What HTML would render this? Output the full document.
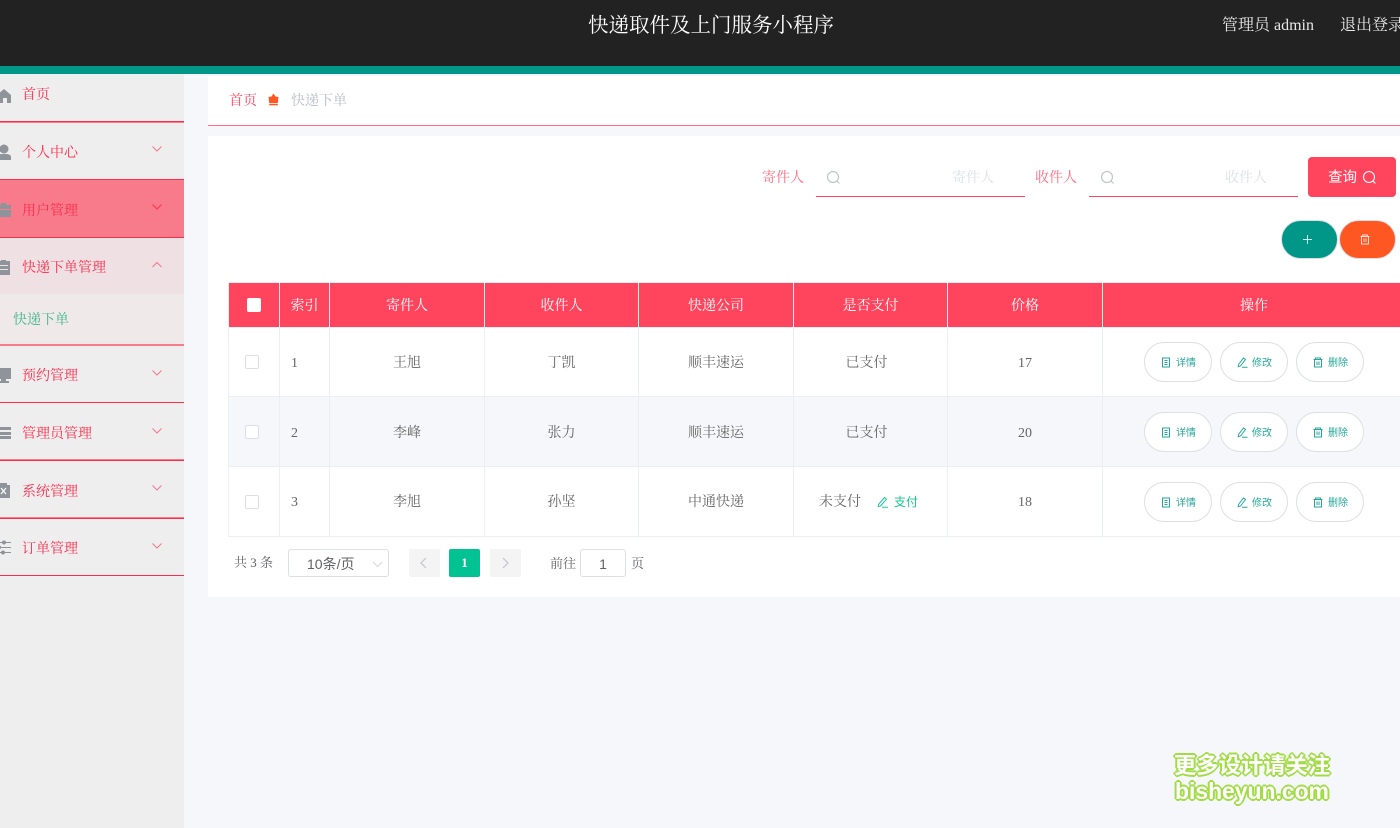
<!DOCTYPE html>
<html lang="zh"><head><meta charset="utf-8"><title>快递取件及上门服务小程序</title>
<style>
*{box-sizing:border-box}
html,body{margin:0;padding:0;width:1400px;height:828px;overflow:hidden;background:#f5f7fa;font-family:"Liberation Serif","Noto Serif CJK SC",serif}
.a{position:absolute;white-space:nowrap}
.sans{font-family:"Liberation Sans","Noto Sans CJK SC",sans-serif}
.hd{left:0;top:0;width:1400px;height:66px;background:#222}
.band{left:0;top:66px;width:1400px;height:8px;background:#009688}
.side{left:0;top:74px;width:184px;height:754px;background:#eee}
.line{left:0;width:184px;height:1px;background:#ff2b4a}
.pk{background:#f77b8a}
.mi{left:22px;font-size:14px;line-height:20px;color:#ff2b4a}
.chev{left:151px;width:12px;height:8px}
.card{left:208px;top:136px;width:1192px;height:461px;background:#fff}
.th{top:283px;height:44px;background:#ff455e;color:#fff;font-size:14px;line-height:48px;text-align:center}
.td{font-size:14px;line-height:20px;text-align:center;color:#666}
.btn{width:68px;height:40px;border:1px solid #dcdfe6;border-radius:20px;background:#fff;color:#26a69a;font-size:10px;line-height:42px;padding-left:31px}
.btn svg{position:absolute;left:16px;top:14px}
.cb{left:245px;width:14px;height:14px;border:1px solid #dcdfe6;border-radius:2px;background:#fff}
.wm{font-family:"Liberation Sans","Noto Sans CJK SC",sans-serif;font-weight:700;color:#fff;text-shadow:1px 1px 0 #a2dc45,-1px -1px 0 #a2dc45,1px -1px 0 #a2dc45,-1px 1px 0 #a2dc45,2px 0 0 #a2dc45,-2px 0 0 #a2dc45,0 2px 0 #a2dc45,0 -2px 0 #a2dc45}
</style></head><body>
<div class="a hd"></div><div class="a band"></div>
<div class="a" style="left:588px;top:12px;font-size:20.500px;line-height:28px;color:#fff">快递取件及上门服务小程序</div>
<div class="a" style="left:1222px;top:16px;font-size:16px;line-height:20px;color:#e8e8e8">管理员 admin</div>
<div class="a" style="left:1340px;top:16px;font-size:16px;line-height:20px;color:#e8e8e8">退出登录</div>

<div class="a side"></div>
<div class="a" style="left:0;top:180px;width:184px;height:57px;background:#f77b8a"></div>
<div class="a" style="left:0;top:238px;width:184px;height:56px;background:#eee0e3"></div>
<div class="a" style="left:0;top:294px;width:184px;height:51px;background:#efe9ea"></div>
<div class="a line" style="top:121px"></div><div class="a line pk" style="top:122px"></div>
<div class="a line" style="top:179px"></div>
<div class="a line pk" style="top:236px"></div><div class="a line" style="top:237px"></div>
<div class="a line pk" style="top:344px"></div><div class="a line pk" style="top:345px"></div>
<div class="a line" style="top:402px"></div>
<div class="a line pk" style="top:459px"></div><div class="a line" style="top:460px"></div>
<div class="a line pk" style="top:517px"></div><div class="a line" style="top:518px"></div>
<div class="a line" style="top:575px"></div>

<div class="a mi" style="top:86px">首页</div>
<div class="a mi" style="top:144px">个人中心</div>
<div class="a mi" style="top:202px">用户管理</div>
<div class="a mi" style="top:259px">快递下单管理</div>
<div class="a" style="left:13px;top:311px;font-size:14px;line-height:20px;color:#3fb58a">快递下单</div>
<div class="a mi" style="top:367px">预约管理</div>
<div class="a mi" style="top:425px">管理员管理</div>
<div class="a mi" style="top:483px">系统管理</div>
<div class="a mi" style="top:540px">订单管理</div>

<svg class="a" style="left:0;top:74px" width="14" height="510" fill="#8f939a">
<path d="M-3 21L4 15L11 21V29H7V24H3V29H-3Z"/>
<circle cx="4" cy="75" r="4.500"/><path d="M-3 86V83C-3 80 1 80 4 80C7 80 11 80 11 83V86Z"/>
<path d="M-4 131H11V135H-4ZM-4 136H11V143H-4ZM1 129V131H6V129Z"/>
<path d="M-3 187H1V186H6V187H10V201H-3ZM0 191V192H8V191ZM0 195V196H8V195Z"/>
<path d="M-4 294H11V305H6V307H9V309H-2V307H1V305H-4Z"/>
<path d="M-4 353H11V356H-4ZM-1 358H11V361H-1ZM-4 362H11V365H-4Z"/>
<path d="M-3 411H0V409H7V411H10V424H-3Z"/><path d="M1 414L6 420M6 414L1 420" stroke="#fff" stroke-width="1.200"/>
<path d="M-4 468H11V469H-4ZM-4 473H11V474H-4ZM-4 478H11V479H-4Z"/><circle cx="4" cy="468.500" r="2"/><circle cx="-1" cy="473.500" r="2"/><circle cx="3" cy="478.500" r="2"/>
</svg>

<svg class="a chev" style="top:145px" viewBox="0 0 12 8" fill="none" stroke="#f5758a"><path d="M1.500 1.500L6 6L10.500 1.500"/></svg>
<svg class="a chev" style="top:203px" viewBox="0 0 12 8" fill="none" stroke="#ff3355"><path d="M1.500 1.500L6 6L10.500 1.500"/></svg>
<svg class="a chev" style="top:261px" viewBox="0 0 12 8" fill="none" stroke="#f5758a"><path d="M1.500 6L6 1.500L10.500 6"/></svg>
<svg class="a chev" style="top:369px" viewBox="0 0 12 8" fill="none" stroke="#f5758a"><path d="M1.500 1.500L6 6L10.500 1.500"/></svg>
<svg class="a chev" style="top:427px" viewBox="0 0 12 8" fill="none" stroke="#f5758a"><path d="M1.500 1.500L6 6L10.500 1.500"/></svg>
<svg class="a chev" style="top:484px" viewBox="0 0 12 8" fill="none" stroke="#f5758a"><path d="M1.500 1.500L6 6L10.500 1.500"/></svg>
<svg class="a chev" style="top:542px" viewBox="0 0 12 8" fill="none" stroke="#f5758a"><path d="M1.500 1.500L6 6L10.500 1.500"/></svg>

<div class="a" style="left:208px;top:76px;width:1192px;height:50px;background:#fff;border-bottom:1px solid #ff6b80"></div>
<div class="a" style="left:229px;top:92px;font-size:14px;line-height:20px;color:#ff455e">首页</div>
<svg class="a" style="left:268px;top:93px" width="11" height="13" fill="#ff5722"><path d="M5.500 0.500L7.500 3.500L10.500 4L9.800 10H1.200L0.500 4L3.500 3.500Z"/><rect x="1.200" y="10.800" width="8.600" height="1.500"/></svg>
<div class="a" style="left:291px;top:92px;font-size:14px;line-height:20px;color:#b6bcc8">快递下单</div>

<div class="a card"></div>
<div class="a" style="left:762px;top:169px;font-size:14px;line-height:20px;color:#ff6b80">寄件人</div>
<svg class="a" style="left:826px;top:170px" width="15" height="15" fill="none" stroke="#c0c4cc" stroke-width="1.200"><circle cx="7" cy="7" r="5.500"/><path d="M11 11L13.500 13.500"/></svg>
<div class="a" style="left:952px;top:169px;font-size:14px;line-height:20px;color:#dcdfe6">寄件人</div>
<div class="a" style="left:816px;top:196px;width:209px;height:1px;background:#ff455e"></div>
<div class="a" style="left:1035px;top:169px;font-size:14px;line-height:20px;color:#ff6b80">收件人</div>
<svg class="a" style="left:1100px;top:170px" width="15" height="15" fill="none" stroke="#c0c4cc" stroke-width="1.200"><circle cx="7" cy="7" r="5.500"/><path d="M11 11L13.500 13.500"/></svg>
<div class="a" style="left:1225px;top:169px;font-size:14px;line-height:20px;color:#dcdfe6">收件人</div>
<div class="a" style="left:1089px;top:196px;width:209px;height:1px;background:#ff455e"></div>
<div class="a sans" style="left:1308px;top:157px;width:88px;height:40px;background:#ff455e;border-radius:4px;color:#fff;font-size:14.500px;line-height:42px;padding-left:20px">查询</div>
<svg class="a" style="left:1362px;top:170px" width="15" height="15" fill="none" stroke="#fff" stroke-width="1.100"><circle cx="7" cy="7" r="5.500"/><path d="M11 11L13.500 13.500"/></svg>

<div class="a" style="left:1281px;top:220px;width:57px;height:39px;border-radius:20px;background:#009688;border:1px solid #dcdfe6"></div>
<svg class="a" style="left:1303px;top:235px" width="9" height="9" stroke="#d8efec" stroke-width=".9"><path d="M4.500 0V9M0 4.500H9"/></svg>
<div class="a" style="left:1339px;top:220px;width:57px;height:39px;border-radius:20px;background:#ff5722;border:1px solid #dcdfe6"></div>
<svg class="a" style="left:1360px;top:234px" width="10" height="11" fill="none" stroke="#ffe5dc" stroke-width=".9"><path d="M0.500 2.500H9.500M2.500 2.500V1H7.500V2.500M1.500 2.500V10H8.500V2.500M4 4.500V8M6 4.500V8"/></svg>

<div class="a" style="left:228px;top:282px;width:1172px;height:255px;background:#ebeef5"></div>
<div class="a th" style="left:229px;width:50px"></div>
<div class="a" style="left:247px;top:298px;width:14px;height:14px;background:#fff;border-radius:2px"></div>
<div class="a th" style="left:280px;width:49px">索引</div>
<div class="a th" style="left:330px;width:154px">寄件人</div>
<div class="a th" style="left:485px;width:153px">收件人</div>
<div class="a th" style="left:639px;width:154px">快递公司</div>
<div class="a th" style="left:794px;width:153px">是否支付</div>
<div class="a th" style="left:948px;width:154px">价格</div>
<div class="a th" style="left:1103px;width:297px"><span style="position:absolute;left:137px;top:0">操作</span></div>

<div class="a" style="left:229px;top:328px;width:1171px;height:68px;background:#fff"></div>
<div class="a" style="left:229px;top:397px;width:1171px;height:69px;background:#f5f7fa"></div>
<div class="a" style="left:229px;top:467px;width:1171px;height:69px;background:#fff"></div>
<div class="a" style="left:279px;top:327px;width:1px;height:209px;background:#ebeef5"></div>
<div class="a" style="left:329px;top:327px;width:1px;height:209px;background:#ebeef5"></div>
<div class="a" style="left:484px;top:327px;width:1px;height:209px;background:#ebeef5"></div>
<div class="a" style="left:638px;top:327px;width:1px;height:209px;background:#ebeef5"></div>
<div class="a" style="left:793px;top:327px;width:1px;height:209px;background:#ebeef5"></div>
<div class="a" style="left:947px;top:327px;width:1px;height:209px;background:#ebeef5"></div>
<div class="a" style="left:1102px;top:327px;width:1px;height:209px;background:#ebeef5"></div>

<div class="a cb" style="top:355px"></div>
<div class="a td" style="left:291px;top:354px">1</div>
<div class="a td" style="left:330px;top:354px;width:154px">王旭</div>
<div class="a td" style="left:485px;top:354px;width:153px">丁凯</div>
<div class="a td" style="left:639px;top:354px;width:154px">顺丰速运</div>
<div class="a td" style="left:790px;top:354px;width:153px">已支付</div>
<div class="a td" style="left:948px;top:354px;width:154px">17</div>

<div class="a cb" style="top:425px"></div>
<div class="a td" style="left:291px;top:424px">2</div>
<div class="a td" style="left:330px;top:424px;width:154px">李峰</div>
<div class="a td" style="left:485px;top:424px;width:153px">张力</div>
<div class="a td" style="left:639px;top:424px;width:154px">顺丰速运</div>
<div class="a td" style="left:790px;top:424px;width:153px">已支付</div>
<div class="a td" style="left:948px;top:424px;width:154px">20</div>

<div class="a cb" style="top:495px"></div>
<div class="a td" style="left:291px;top:493px">3</div>
<div class="a td" style="left:330px;top:493px;width:154px">李旭</div>
<div class="a td" style="left:485px;top:493px;width:153px">孙坚</div>
<div class="a td" style="left:639px;top:493px;width:154px">中通快递</div>
<div class="a td" style="left:819px;top:493px">未支付</div>
<svg class="a" style="left:877px;top:496px" width="12" height="12" fill="none" stroke="#1fc99a"><path d="M1.500 8.500L7.500 1.500L9.500 3.200L3.500 10L1.200 10.500ZM5 11.300H11"/></svg>
<div class="a sans" style="left:894px;top:492px;font-size:12px;line-height:20px;color:#19c48f">支付</div>
<div class="a td" style="left:948px;top:493px;width:154px">18</div>

<div class="a btn sans" style="left:1144px;top:342px"><svg width="10" height="11" fill="none" stroke="#26a69a"><path d="M1.500 1H8.500V10H1.500ZM3.500 3.500H6.500M3.500 5.500H6.500M3.500 7.500H6.500"/></svg>详情</div>
<div class="a btn sans" style="left:1220px;top:342px"><svg width="11" height="11" fill="none" stroke="#26a69a"><path d="M1.500 7.500L6.500 1L8.500 2.500L3.500 9L1.200 9.700ZM5 10.300H10.500"/></svg>修改</div>
<div class="a btn sans" style="left:1296px;top:342px"><svg width="10" height="11" fill="none" stroke="#26a69a"><path d="M0.500 2.500H9.500M2.500 2.500V1H7.500V2.500M1.500 2.500V10H8.500V2.500M4 4.500V8M6 4.500V8"/></svg>删除</div>

<div class="a btn sans" style="left:1144px;top:412px"><svg width="10" height="11" fill="none" stroke="#26a69a"><path d="M1.500 1H8.500V10H1.500ZM3.500 3.500H6.500M3.500 5.500H6.500M3.500 7.500H6.500"/></svg>详情</div>
<div class="a btn sans" style="left:1220px;top:412px"><svg width="11" height="11" fill="none" stroke="#26a69a"><path d="M1.500 7.500L6.500 1L8.500 2.500L3.500 9L1.200 9.700ZM5 10.300H10.500"/></svg>修改</div>
<div class="a btn sans" style="left:1296px;top:412px"><svg width="10" height="11" fill="none" stroke="#26a69a"><path d="M0.500 2.500H9.500M2.500 2.500V1H7.500V2.500M1.500 2.500V10H8.500V2.500M4 4.500V8M6 4.500V8"/></svg>删除</div>

<div class="a btn sans" style="left:1144px;top:482px"><svg width="10" height="11" fill="none" stroke="#26a69a"><path d="M1.500 1H8.500V10H1.500ZM3.500 3.500H6.500M3.500 5.500H6.500M3.500 7.500H6.500"/></svg>详情</div>
<div class="a btn sans" style="left:1220px;top:482px"><svg width="11" height="11" fill="none" stroke="#26a69a"><path d="M1.500 7.500L6.500 1L8.500 2.500L3.500 9L1.200 9.700ZM5 10.300H10.500"/></svg>修改</div>
<div class="a btn sans" style="left:1296px;top:482px"><svg width="10" height="11" fill="none" stroke="#26a69a"><path d="M0.500 2.500H9.500M2.500 2.500V1H7.500V2.500M1.500 2.500V10H8.500V2.500M4 4.500V8M6 4.500V8"/></svg>删除</div>

<div class="a" style="left:234px;top:553px;font-size:13px;line-height:20px;color:#606266">共 3 条</div>
<div class="a sans" style="left:288px;top:549px;width:101px;height:28px;border:1px solid #dcdfe6;border-radius:3px;background:#fff;font-size:14px;line-height:28px;color:#606266;padding-left:18px">10条/页</div>
<svg class="a" style="left:372px;top:561px" width="11" height="7" fill="none" stroke="#d5d8de"><path d="M1 1L5.500 5.500L10 1"/></svg>
<div class="a" style="left:409px;top:549px;width:31px;height:28px;background:#f4f4f5;border-radius:2px"></div>
<svg class="a" style="left:420px;top:557px" width="7" height="12" fill="none" stroke="#c0c4cc" stroke-width="1.200"><path d="M6 1L1 6L6 11"/></svg>
<div class="a" style="left:449px;top:549px;width:31px;height:28px;background:#00c292;border-radius:2px;color:#fff;font-size:13px;font-weight:700;line-height:28px;text-align:center">1</div>
<div class="a" style="left:490px;top:549px;width:31px;height:28px;background:#f4f4f5;border-radius:2px"></div>
<svg class="a" style="left:502px;top:557px" width="7" height="12" fill="none" stroke="#c0c4cc" stroke-width="1.200"><path d="M1 1L6 6L1 11"/></svg>
<div class="a" style="left:550px;top:554px;font-size:13px;line-height:20px;color:#606266">前往</div>
<div class="a sans" style="left:580px;top:549px;width:46px;height:28px;border:1px solid #dcdfe6;border-radius:3px;background:#fff;font-size:14px;line-height:28px;color:#606266;text-align:center">1</div>
<div class="a" style="left:631px;top:554px;font-size:13px;line-height:20px;color:#606266">页</div>

<div class="a wm" style="left:1174px;top:751px;font-size:22.300px;line-height:30px">更多设计请关注</div>
<div class="a wm" style="left:1175px;top:776px;font-size:22.900px;line-height:30px">bisheyun.com</div>
</body></html>
